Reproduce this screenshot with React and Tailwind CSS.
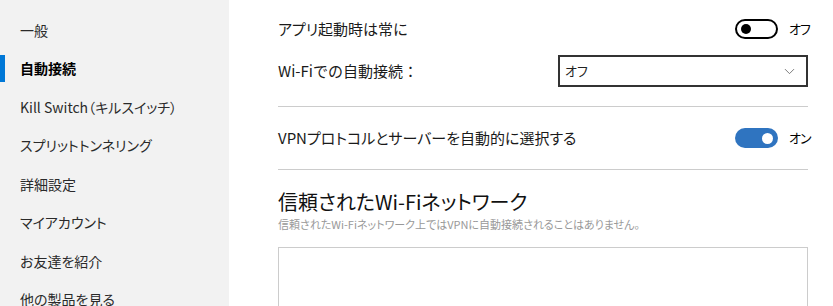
import { FiChevronDown } from "react-icons/fi";

const menu = [
  "一般",
  "自動接続",
  "Kill Switch（キルスイッチ）",
  "スプリットトンネリング",
  "詳細設定",
  "マイアカウント",
  "お友達を紹介",
  "他の製品を見る",
];

function Toggle({ on }) {
  return (
    <div className="flex items-center gap-[11px]">
      {on ? (
        <div className="flex h-[20px] w-[43px] items-center justify-end rounded-full bg-[#2f74c0] pr-[5px]">
          <div className="h-[11px] w-[11px] rounded-full bg-white" />
        </div>
      ) : (
        <div className="flex h-[20px] w-[43px] items-center rounded-full border-2 border-black pl-[4px]">
          <div className="h-[10px] w-[10px] rounded-full bg-black" />
        </div>
      )}
      <span className="w-[19px] whitespace-nowrap text-[13px] tracking-[-1px] text-black">{on ? "オン" : "オフ"}</span>
    </div>
  );
}

export default function App() {
  return (
    <div className="flex h-[306px] w-[833px] overflow-hidden bg-white font-['Noto_Sans_CJK_JP',sans-serif] text-[#1a1a1a] [font-feature-settings:'palt']">
      <aside className="w-[229px] shrink-0 bg-[#f2f2f2] pt-[11px]">
        {menu.map((m, i) => (
          <div key={m} className="relative flex h-[38.5px] items-center pl-[20px] text-[14px] text-[#2a2a2a]">
            {i === 1 && <div className="absolute left-0 top-[5px] h-[27px] w-[5px] bg-[#0078d7]" />}
            <span className={i === 1 ? "font-bold text-black" : ""}>{m}</span>
          </div>
        ))}
      </aside>

      <main className="flex-1 pl-[49px] pr-[25px]">
        <div className="mt-[19px] flex h-[20px] items-center justify-between">
          <span className="text-[15px]">アプリ起動時は常に</span>
          <Toggle on={false} />
        </div>
        <div className="mt-[16px] flex items-center justify-between">
          <span className="text-[15px] [font-feature-settings:normal]">Wi-Fiでの自動接続：</span>
          <div className="flex h-[32px] w-[250px] items-center justify-between border-2 border-[#333] pl-[5px] pr-[8px] text-[13px] text-[#222]">
            <span>オフ</span>
            <FiChevronDown className="text-[#666]" size={17} strokeWidth={1.2} />
          </div>
        </div>
        <div className="mt-[19px] h-px bg-[#ccc]" />
        <div className="flex h-[62px] items-center justify-between">
          <span className="text-[15px]">VPNプロトコルとサーバーを自動的に選択する</span>
          <Toggle on />
        </div>
        <div className="h-px bg-[#ccc]" />
        <h2 className="mt-[18px] text-[20px] leading-[28px] text-[#111]">信頼されたWi-Fiネットワーク</h2>
        <p className="text-[11px] leading-[16px] text-[#999]">信頼されたWi-Fiネットワーク上ではVPNに自動接続されることはありません。</p>
        <div className="mt-[15px] h-[80px] border border-[#ccc]" />
      </main>
    </div>
  );
}
